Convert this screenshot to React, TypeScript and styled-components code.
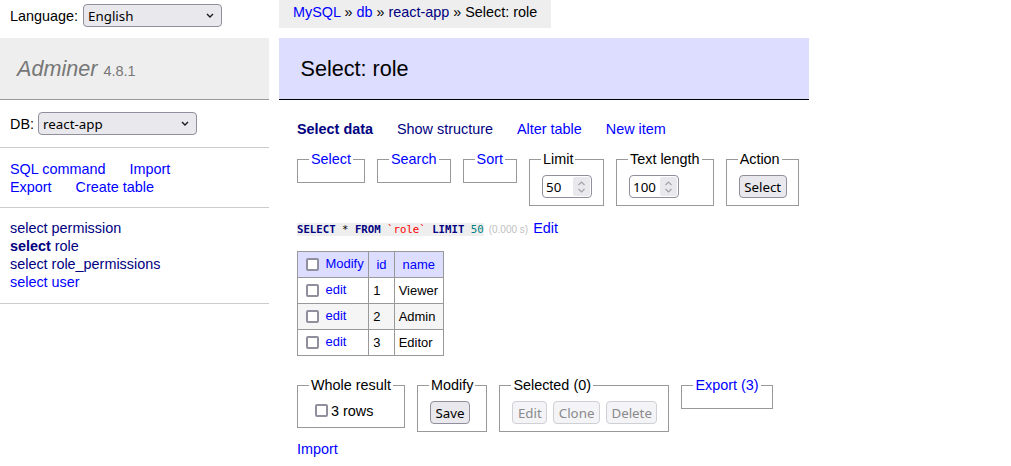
import React from "react";
import styled, { createGlobalStyle } from "styled-components";

const GlobalStyle = createGlobalStyle`
  body {
    margin: 0;
    background: #fff;
    color: #000;
    font: 14.4px/18px "Liberation Sans", Arial, Helvetica, sans-serif;
  }
`;

const Page = styled.div`
  display: flex;
  align-items: flex-start;
`;

const Sidebar = styled.aside`
  width: 269px;
  flex: none;
`;

const LangBar = styled.div`
  height: 38px;
  box-sizing: border-box;
  padding: 4px 10px 0;
`;

const InlineField = styled.label<{ $gap?: number }>`
  display: flex;
  align-items: center;
  gap: ${(p) => p.$gap ?? 5}px;
  height: 23px;
`;

const Logo = styled.h1`
  margin: 0;
  height: 62px;
  box-sizing: border-box;
  padding: 17px 17px;
  font-size: 21.6px;
  line-height: 27px;
  font-weight: normal;
  color: #777;
  background: #eee;
  border-bottom: 1px solid #999;
`;

const LogoLink = styled.a`
  color: #777;
  font-style: italic;
  text-decoration: none;
`;

const Version = styled.span`
  font-size: 14.5px;
  line-height: 1;
  color: #777;
`;

const MenuSection = styled.div<{ $pad?: string }>`
  padding: ${(p) => p.$pad ?? "12px 10px 11px"};
  border-bottom: 1px solid #ccc;
`;

const LinkLine = styled.div`
  display: flex;
  gap: 24px;
  white-space: nowrap;
`;

const Link = styled.a<{ $visited?: boolean; $bold?: boolean }>`
  color: ${(p) => (p.$visited ? "navy" : "blue")};
  font-weight: ${(p) => (p.$bold ? "bold" : "normal")};
  text-decoration: none;
`;

const TableList = styled.ul`
  list-style: none;
  margin: 0;
  padding: 0;
`;

const SelectWrap = styled.span<{ $width: number }>`
  position: relative;
  display: inline-flex;
  width: ${(p) => p.$width}px;
`;

const SelectInput = styled.select`
  appearance: none;
  width: 100%;
  height: 23px;
  box-sizing: border-box;
  margin: 0;
  padding: 0 20px 0 4px;
  border: 1px solid #8f8f9d;
  border-radius: 4px;
  background: #e9e9ed;
  color: #000;
  font: 13.33px "Noto Sans", sans-serif;
`;

const Caret = styled.svg`
  position: absolute;
  right: 8px;
  top: 9px;
  pointer-events: none;
`;

const Main = styled.main`
  margin-left: 10px;
  width: 530px;
  flex: none;
`;

const Breadcrumb = styled.div`
  display: inline-block;
  height: 28px;
  line-height: 25.5px;
  padding: 0 14px;
  background: #eee;
  white-space: nowrap;
  margin-bottom: 10px;
  vertical-align: top;
`;

const Title = styled.h2`
  margin: 0 0 20px;
  height: 62px;
  box-sizing: border-box;
  padding: 17px 21.6px;
  font-size: 21.6px;
  line-height: 27px;
  font-weight: normal;
  color: #000;
  background: #ddf;
  border-bottom: 1px solid #000;
`;

const Body = styled.div`
  padding-left: 18px;
  display: flex;
  flex-direction: column;
  align-items: flex-start;
`;

const Tabs = styled.div`
  display: flex;
  gap: 24px;
  height: 18px;
`;

const FieldsetRow = styled.div<{ $top: number }>`
  display: flex;
  align-items: flex-start;
  gap: 12px;
  margin-top: ${(p) => p.$top}px;
`;

const Box = styled.fieldset`
  margin: 0;
  padding: 7px 11px;
  border: 1px solid #999;
  min-width: 0;
`;

const Legend = styled.legend`
  padding: 0 2px;
  line-height: 18px;
`;

const Controls = styled.div`
  display: flex;
  align-items: center;
  gap: 5px;
`;

const NumberBox = styled.span`
  display: inline-flex;
  align-items: center;
  width: 50px;
  height: 23px;
  box-sizing: border-box;
  margin-left: 1px;
  border: 1px solid #8f8f9d;
  border-radius: 4px;
  background: #fff;
`;

const NumberField = styled.input`
  flex: 1;
  width: 0;
  margin: 0;
  padding: 0 0 0 3px;
  border: 0;
  outline: none;
  background: transparent;
  color: #000;
  font: 13.33px "Noto Sans", sans-serif;
`;

const Spinner = styled.span`
  width: 17px;
  height: 19px;
  margin-right: 1px;
  display: flex;
  align-items: center;
  justify-content: center;
  background: #e9e9ed;
  border-radius: 2px;
`;

const Button = styled.button`
  height: 23px;
  margin: 0 0 0 1px;
  padding: 0 4.5px;
  border: 1px solid #8f8f9d;
  border-radius: 4px;
  background: #e9e9ed;
  color: #000;
  font: 13.33px "Noto Sans", sans-serif;

  &:disabled {
    color: #8a8a8e;
    border-color: #cfcfd6;
    background: #f4f4f6;
  }
`;

const Check = styled.input.attrs({ type: "checkbox" })`
  appearance: none;
  width: 13px;
  height: 13px;
  box-sizing: border-box;
  margin: 3px 3px 3px 4px;
  border: 2px solid #8f8f9d;
  border-radius: 2px;
  background: #fff;
  vertical-align: middle;
`;

const RowsLabel = styled.label`
  display: flex;
  align-items: center;
  padding-left: 2px;
`;

const SqlLine = styled.p`
  margin: 13px 0 0;
  line-height: 18px;
  white-space: nowrap;
`;

const Code = styled.code`
  background: #eee;
  font: 10.7px "DejaVu Sans Mono", monospace;
`;

const Kw = styled.span<{ $tone: "kw" | "str" | "num" }>`
  font-weight: ${(p) => (p.$tone === "kw" ? "bold" : "normal")};
  color: ${(p) => (p.$tone === "kw" ? "navy" : p.$tone === "str" ? "red" : "#007f7f")};
`;

const Time = styled.span`
  color: silver;
  font-size: 10px;
  margin-left: 1px;
`;

const EditLink = styled(Link)`
  margin-left: 1px;
`;

const DataTable = styled.table`
  margin-top: 12px;
  border-collapse: collapse;
  font-size: 12.96px;
  line-height: 16px;
`;

const HeadCell = styled.th<{ $first?: boolean; $w?: number }>`
  border: 1px solid #999;
  background: #ddf;
  height: 20px;
  min-width: ${(p) => (p.$w ? `${p.$w}px` : "0")};
  padding: 2.5px ${(p) => (p.$first ? "3.9px" : "6.5px")};
  text-align: ${(p) => (p.$first ? "left" : "center")};
  font-weight: ${(p) => (p.$first ? "normal" : "bold")};
  white-space: nowrap;
`;

const Row = styled.tr<{ $odd?: boolean }>`
  background: ${(p) => (p.$odd ? "#f5f5f5" : "#fff")};
`;

const Cell = styled.td`
  border: 1px solid #999;
  height: 20px;
  padding: 2.5px 3.9px;
  white-space: nowrap;
`;

const Footer = styled.p`
  margin: 8px 0 0;
  line-height: 18px;
`;

const Dropdown = ({ width, value }: { width: number; value: string }) => (
  <SelectWrap $width={width}>
    <SelectInput defaultValue={value}>
      <option>{value}</option>
    </SelectInput>
    <Caret width="8" height="5" viewBox="0 0 8 5">
      <path d="M1 1l3 3 3-3" fill="none" stroke="#1b1b1b" strokeWidth="1.4" />
    </Caret>
  </SelectWrap>
);

const NumberInput = ({ value }: { value: number }) => (
  <NumberBox>
    <NumberField defaultValue={value} />
    <Spinner>
      <svg width="9" height="14" viewBox="0 0 9 14">
        <path d="M1.5 5L4.5 2l3 3M1.5 9l3 3 3-3" fill="none" stroke="#a3a3a8" strokeWidth="1.2" />
      </svg>
    </Spinner>
  </NumberBox>
);

const rows = [
  { id: 1, name: "Viewer" },
  { id: 2, name: "Admin" },
  { id: 3, name: "Editor" },
];

export default function App() {
  return (
    <>
      <GlobalStyle />
      <Page>
        <Sidebar>
          <LangBar>
            <InlineField>
              Language: <Dropdown width={139} value="English" />
            </InlineField>
          </LangBar>
          <Logo>
            <LogoLink href="#">Adminer</LogoLink> <Version>4.8.1</Version>
          </Logo>
          <MenuSection $pad="12px 10px 12px">
            <InlineField $gap={4}>
              DB: <Dropdown width={159} value="react-app" />
            </InlineField>
          </MenuSection>
          <MenuSection $pad="12px 10px 11px">
            <LinkLine>
              <Link href="#">SQL command</Link>
              <Link href="#">Import</Link>
            </LinkLine>
            <LinkLine>
              <Link href="#">Export</Link>
              <Link href="#">Create table</Link>
            </LinkLine>
          </MenuSection>
          <MenuSection $pad="11px 10px 12px">
            <TableList>
              <li>
                <Link href="#" $visited>select</Link> <Link href="#" $visited>permission</Link>
              </li>
              <li>
                <Link href="#" $visited $bold>select</Link> <Link href="#" $visited>role</Link>
              </li>
              <li>
                <Link href="#" $visited>select</Link> <Link href="#" $visited>role_permissions</Link>
              </li>
              <li>
                <Link href="#">select</Link> <Link href="#">user</Link>
              </li>
            </TableList>
          </MenuSection>
        </Sidebar>

        <Main>
          <Breadcrumb>
            <Link href="#">MySQL</Link> » <Link href="#">db</Link> » <Link href="#" $visited>react-app</Link> » Select: role
          </Breadcrumb>
          <Title>Select: role</Title>
          <Body>
            <Tabs>
              <Link href="#" $visited $bold>Select data</Link>
              <Link href="#" $visited>Show structure</Link>
              <Link href="#">Alter table</Link>
              <Link href="#">New item</Link>
            </Tabs>

            <FieldsetRow $top={12}>
              <Box>
                <Legend><Link href="#">Select</Link></Legend>
              </Box>
              <Box>
                <Legend><Link href="#">Search</Link></Legend>
              </Box>
              <Box>
                <Legend><Link href="#">Sort</Link></Legend>
              </Box>
              <Box>
                <Legend>Limit</Legend>
                <Controls><NumberInput value={50} /></Controls>
              </Box>
              <Box>
                <Legend>Text length</Legend>
                <Controls><NumberInput value={100} /></Controls>
              </Box>
              <Box>
                <Legend>Action</Legend>
                <Controls><Button>Select</Button></Controls>
              </Box>
            </FieldsetRow>

            <SqlLine>
              <Code>
                <Kw $tone="kw">SELECT</Kw> * <Kw $tone="kw">FROM</Kw> <Kw $tone="str">`role`</Kw>{" "}
                <Kw $tone="kw">LIMIT</Kw> <Kw $tone="num">50</Kw>
              </Code>{" "}
              <Time>(0.000 s)</Time> <EditLink href="#">Edit</EditLink>
            </SqlLine>

            <DataTable>
              <thead>
                <tr>
                  <HeadCell $first $w={62.5}>
                    <Check /> <Link href="#">Modify</Link>
                  </HeadCell>
                  <HeadCell $w={11.5}><Link href="#">id</Link></HeadCell>
                  <HeadCell $w={35}><Link href="#">name</Link></HeadCell>
                </tr>
              </thead>
              <tbody>
                {rows.map((r, i) => (
                  <Row key={r.id} $odd={i % 2 === 1}>
                    <Cell>
                      <Check /> <Link href="#">edit</Link>
                    </Cell>
                    <Cell>{r.id}</Cell>
                    <Cell>{r.name}</Cell>
                  </Row>
                ))}
              </tbody>
            </DataTable>

            <FieldsetRow $top={20}>
              <Box>
                <Legend>Whole result</Legend>
                <RowsLabel>
                  <Check />3 rows
                </RowsLabel>
              </Box>
              <Box>
                <Legend>Modify</Legend>
                <Controls><Button>Save</Button></Controls>
              </Box>
              <Box>
                <Legend>Selected (0)</Legend>
                <Controls>
                  <Button disabled>Edit</Button>
                  <Button disabled>Clone</Button>
                  <Button disabled>Delete</Button>
                </Controls>
              </Box>
              <Box>
                <Legend><Link href="#">Export (3)</Link></Legend>
              </Box>
            </FieldsetRow>

            <Footer>
              <Link href="#">Import</Link>
            </Footer>
          </Body>
        </Main>
      </Page>
    </>
  );
}
